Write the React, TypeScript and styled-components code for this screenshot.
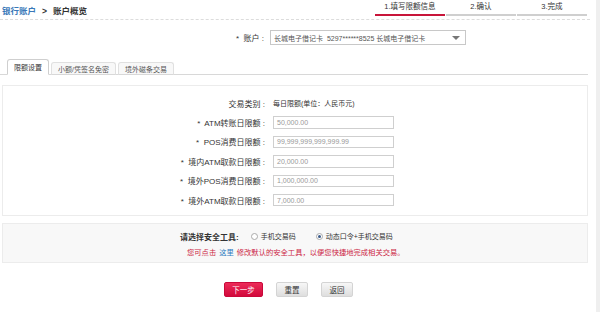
import React from 'react';
import styled, { createGlobalStyle } from 'styled-components';

const Global = createGlobalStyle`
  html, body { margin: 0; padding: 0; background: #fff; }
  body {
    font-family: "Liberation Sans", "Noto Sans CJK SC", sans-serif;
    font-size: 8px;
    color: #333;
  }
  * { box-sizing: border-box; }
`;

const Page = styled.div`
  width: 600px;
  height: 312px;
  border-right: 4px solid #efefef;
  display: flex;
  flex-direction: column;
  overflow: hidden;
`;

const Header = styled.div`
  height: 20px;
  margin-right: 6px;
  display: flex;
  justify-content: space-between;
  align-items: flex-start;
  border-bottom: 1px dashed #dcdcdc;
`;

const Crumbs = styled.div`
  padding: 6px 0 0 2px;
  line-height: 10px;
  font-size: 8.5px;
  font-weight: bold;
  display: flex;
  gap: 6px;
`;

const CrumbLink = styled.span`
  color: #3a78b8;
`;

const Steps = styled.div`
  display: flex;
  gap: 1px;
  margin-right: 3px;
`;

const Step = styled.div<{ $active?: boolean }>`
  width: 70px;
  padding-top: 1px;
  text-align: center;
  font-size: 7.5px;
  line-height: 11px;
  color: #333;
  &::after {
    content: '';
    display: block;
    height: 2px;
    margin-top: 1.5px;
    background: ${(p) => (p.$active ? '#c8153a' : '#cfcfcf')};
  }
`;

const AccountRow = styled.div`
  margin-top: 10px;
  display: grid;
  grid-template-columns: 264px 196px;
  column-gap: 6px;
  align-items: center;
`;

const FieldLabel = styled.div`
  text-align: right;
  font-size: 8px;
  white-space: pre;
`;

const Select = styled.div`
  height: 15px;
  border: 1px solid #c8c8c8;
  display: flex;
  align-items: center;
  justify-content: space-between;
  padding: 0 5px 0 3px;
  font-size: 7px;
  color: #555;
  white-space: nowrap;
`;

const Caret = styled.span`
  width: 0;
  height: 0;
  border-left: 4px solid transparent;
  border-right: 4px solid transparent;
  border-top: 4px solid #777;
`;

const TabBar = styled.div`
  margin-top: 14px;
  margin-right: 8px;
  height: 16px;
  padding-left: 7px;
  display: flex;
  align-items: flex-end;
  gap: 2px;
  border-bottom: 1px solid #d8d8d8;
`;

const Tab = styled.div<{ $active?: boolean }>`
  height: ${(p) => (p.$active ? '16px' : '13px')};
  padding: 0 6px;
  margin-bottom: -1px;
  display: flex;
  align-items: center;
  font-size: 7px;
  color: ${(p) => (p.$active ? '#333' : '#555')};
  background: ${(p) => (p.$active ? '#fff' : '#f8f8f8')};
  border: 1px solid ${(p) => (p.$active ? '#cfcfcf' : '#e0e0e0')};
  border-bottom: ${(p) => (p.$active ? '1px solid #fff' : '1px solid #d8d8d8')};
  border-radius: 3px 3px 0 0;
  white-space: nowrap;
`;

const Panel = styled.div<{ $shade?: boolean }>`
  margin-left: 2px;
  width: 586px;
  border: 1px solid #ececec;
  background: ${(p) => (p.$shade ? '#f8f8f8' : '#fff')};
`;

const LimitPanel = styled(Panel)`
  margin-top: 10px;
  height: 131px;
  padding-top: 7.5px;
  display: grid;
  grid-template-columns: 262px 121px;
  grid-auto-rows: 19.4px;
  column-gap: 8px;
  align-items: center;
`;

const Value = styled.div`
  font-size: 7px;
  color: #333;
  white-space: nowrap;
`;

const Input = styled.div`
  height: 12.5px;
  border: 1px solid #cfcfcf;
  padding-left: 3px;
  display: flex;
  align-items: center;
  font-size: 7px;
  color: #999;
`;

const SecurityPanel = styled(Panel)`
  margin-top: 7px;
  height: 40px;
  padding-top: 7px;
  display: flex;
  flex-direction: column;
  gap: 7px;
`;

const ToolLine = styled.div`
  padding-left: 177px;
  height: 10px;
  display: flex;
  align-items: center;
  font-size: 7px;
`;

const ToolTitle = styled.span`
  font-weight: bold;
  font-size: 8px;
  margin-right: 12px;
`;

const RadioOption = styled.label`
  display: flex;
  align-items: center;
  gap: 3px;
  margin-right: 20px;
  color: #333;
`;

const RadioDot = styled.span<{ $checked?: boolean }>`
  width: 7px;
  height: 7px;
  border-radius: 50%;
  border: 1px solid #aaa;
  background: #fff;
  display: inline-flex;
  align-items: center;
  justify-content: center;
  &::after {
    content: '';
    width: 3px;
    height: 3px;
    border-radius: 50%;
    background: ${(p) => (p.$checked ? '#3b5b8a' : 'transparent')};
  }
`;

const Hint = styled.div`
  padding-left: 184px;
  height: 10px;
  line-height: 10px;
  font-size: 7.3px;
  color: #cc1f45;
  white-space: nowrap;
`;

const HintLink = styled.span`
  color: #2a7ac0;
  margin: 0 3px;
`;

const Buttons = styled.div`
  margin-top: 19px;
  padding-left: 224px;
  display: flex;
  gap: 13px;
`;

const Button = styled.div<{ $primary?: boolean; $w: number }>`
  width: ${(p) => p.$w}px;
  height: 15px;
  border-radius: 2px;
  display: flex;
  align-items: center;
  justify-content: center;
  font-size: 7.5px;
  color: ${(p) => (p.$primary ? '#fff' : '#333')};
  background: ${(p) =>
    p.$primary
      ? 'linear-gradient(#ec2a58, #d20a3c)'
      : 'linear-gradient(#f7f7f7, #dedede)'};
  border: 1px solid ${(p) => (p.$primary ? '#c9083a' : '#d4d4d4')};
`;

const limits = [
  ['*  ATM转账日限额 :', '50,000.00'],
  ['*  POS消费日限额 :', '99,999,999,999,999.99'],
  ['*  境内ATM取款日限额 :', '20,000.00'],
  ['*  境外POS消费日限额 :', '1,000,000.00'],
  ['*  境外ATM取款日限额 :', '7,000.00'],
];

export default function App() {
  return (
    <>
      <Global />
      <Page>
        <Header>
          <Crumbs>
            <CrumbLink>银行账户</CrumbLink>
            <span>&gt;</span>
            <span>账户概览</span>
          </Crumbs>
          <Steps>
            <Step $active>1.填写限额信息</Step>
            <Step>2.确认</Step>
            <Step>3.完成</Step>
          </Steps>
        </Header>

        <AccountRow>
          <FieldLabel>*  账户 :</FieldLabel>
          <Select>
            <span>长城电子借记卡&nbsp;&nbsp;5297******8525 长城电子借记卡</span>
            <Caret />
          </Select>
        </AccountRow>

        <TabBar>
          <Tab $active>限额设置</Tab>
          <Tab>小额/凭签名免密</Tab>
          <Tab>境外磁条交易</Tab>
        </TabBar>

        <LimitPanel>
          <FieldLabel>交易类别 :</FieldLabel>
          <Value>每日限额(单位：人民币元)</Value>
          {limits.map(([label, value]) => (
            <React.Fragment key={label}>
              <FieldLabel>{label}</FieldLabel>
              <Input>{value}</Input>
            </React.Fragment>
          ))}
        </LimitPanel>

        <SecurityPanel $shade>
          <ToolLine>
            <ToolTitle>请选择安全工具:</ToolTitle>
            <RadioOption>
              <RadioDot />
              手机交易码
            </RadioOption>
            <RadioOption>
              <RadioDot $checked />
              动态口令+手机交易码
            </RadioOption>
          </ToolLine>
          <Hint>
            您可点击<HintLink>这里</HintLink>修改默认的安全工具，以便您快捷地完成相关交易。
          </Hint>
        </SecurityPanel>

        <Buttons>
          <Button $primary $w={39}>下一步</Button>
          <Button $w={32}>重置</Button>
          <Button $w={32}>返回</Button>
        </Buttons>
      </Page>
    </>
  );
}
